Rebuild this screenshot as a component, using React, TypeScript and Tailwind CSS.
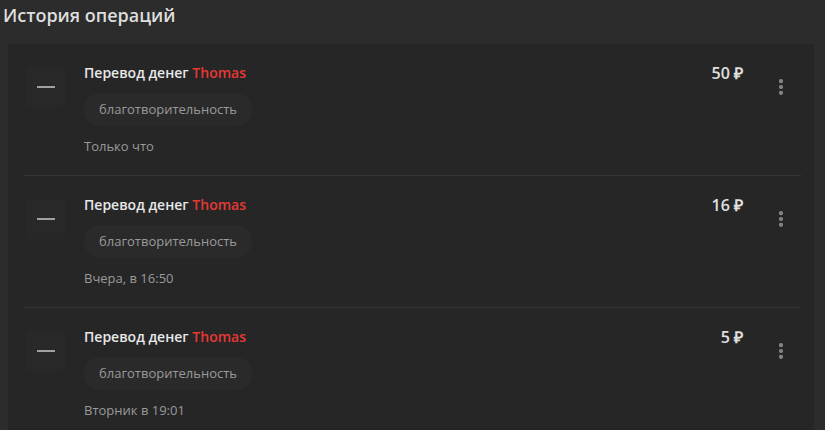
import { EllipsisVertical } from "lucide-react";

type Operation = {
  id: number;
  amount: number;
  recipient: string;
  category: string;
  time: string;
};

const operations: Operation[] = [
  { id: 1, amount: 50, recipient: "Thomas", category: "благотворительность", time: "Только что" },
  { id: 2, amount: 16, recipient: "Thomas", category: "благотворительность", time: "Вчера, в 16:50" },
  { id: 3, amount: 5, recipient: "Thomas", category: "благотворительность", time: "Вторник в 19:01" },
];

function OperationRow({ op, last }: { op: Operation; last: boolean }) {
  return (
    <div className={last ? "flex py-5" : "flex border-b border-[#363636] py-5"}>
      <div className="ml-[2px] mt-[3px] flex h-10 w-10 shrink-0 items-center justify-center rounded bg-[#282828]">
        <span className="block h-[2px] w-[18px] bg-[#a0a0a0]" />
      </div>
      <div className="ml-[18px] flex-1">
        <div className="text-[14px] font-semibold leading-[18px] text-[#e8e8e8]">
          Перевод денег <span className="text-[#e53935]">{op.recipient}</span>
        </div>
        <div className="mt-[11px] inline-block rounded-2xl bg-[#2a2a2a] px-[15px] py-[7px] text-[13px] leading-[19px] text-[#9a9a9a]">
          {op.category}
        </div>
        <div className="mt-3 text-[13px] leading-[17px] text-[#9a9a9a]">{op.time}</div>
      </div>
      <div className="text-[16px] font-semibold leading-[18px] text-[#e0e0e0]">{op.amount} ₽</div>
      <button
        type="button"
        className="ml-[18px] mt-[3px] flex h-10 w-10 items-center justify-center text-[#8a8a8a]"
      >
        <EllipsisVertical size={20} strokeWidth={3} />
      </button>
    </div>
  );
}

export default function App() {
  return (
    <div className="min-h-[430px] bg-[#2c2c2c] font-['Open_Sans',sans-serif]">
      <h2 className="px-[3px] pt-[3px] text-[18px] font-semibold leading-6 text-[#dedede]">
        История операций
      </h2>
      <div className="ml-2 mr-[11px] mt-[17px] bg-[#262626] pl-4 pr-[13px]">
        {operations.map((op, i) => (
          <OperationRow key={op.id} op={op} last={i === operations.length - 1} />
        ))}
      </div>
    </div>
  );
}
